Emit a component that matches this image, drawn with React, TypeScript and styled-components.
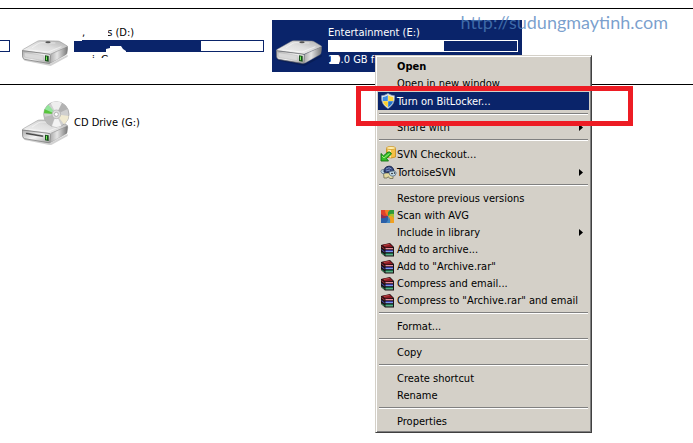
import React from "react";
import styled, { createGlobalStyle, css } from "styled-components";

const NAVY = "#0a246a";
const FACE = "#d4d0c8";

const GlobalStyle = createGlobalStyle`
  * { box-sizing: border-box; }
  body {
    margin: 0;
    background: #fff;
    color: #000;
    font: 11px/14px "DejaVu Sans Condensed", "DejaVu Sans", sans-serif;
    overflow: hidden;
  }
`;

const Page = styled.main`
  position: relative;
  min-height: 100vh;
  padding-top: 8px;
`;

const DriveRow = styled.section<{ $ruled?: boolean }>`
  display: flex;
  gap: 4px;
  padding: 11px 0 12px;
  ${(p) =>
    p.$ruled &&
    css`
      border-top: 1px solid #000;
      border-bottom: 1px solid #000;
    `}
`;

const ClippedTile = styled.div`
  display: flex;
  justify-content: flex-end;
  width: 14px;
  padding: 20px 4px 0 0;
  overflow: hidden;
`;

const Tile = styled.article<{ $selected?: boolean; $center?: boolean }>`
  position: relative;
  display: flex;
  align-items: ${(p) => (p.$center ? "center" : "flex-start")};
  gap: 4px;
  width: 250px;
  height: 52px;
  padding: ${(p) => (p.$center ? "2px 4px 0" : "0 4px")};
  background: ${(p) => (p.$selected ? NAVY : "transparent")};
  color: ${(p) => (p.$selected ? "#fff" : "#000")};
`;

const IconSlot = styled.div<{ $top?: number }>`
  flex: none;
  width: 48px;
  padding-top: ${(p) => p.$top ?? 0}px;
  svg { display: block; }
`;

const Info = styled.div`
  flex: 1;
  min-width: 0;
  padding-top: 6px;
`;

const DriveName = styled.div<{ $indent?: number }>`
  padding-left: ${(p) => p.$indent ?? 0}px;
  display: flex;
  gap: 22px;
  white-space: pre;
`;

const Bar = styled.div<{ $light?: boolean; $used: number }>`
  position: relative;
  width: 190px;
  flex: none;
  height: 12px;
  border: 1px solid ${(p) => (p.$light ? "#fff" : NAVY)};
  &::before {
    content: "";
    display: block;
    height: 100%;
    width: ${(p) => p.$used}%;
    background: ${(p) => (p.$light ? "#fff" : NAVY)};
  }
`;

const Detail = styled.div<{ $indent?: number; $covered?: boolean }>`
  position: relative;
  padding: 1px 0 0 ${(p) => p.$indent ?? 0}px;
  white-space: pre;
  ${(p) =>
    p.$covered &&
    css`
      &::after {
        content: "";
        position: absolute;
        inset: 6px 0 0;
        background: #fff;
      }
    `}
`;

const Smudge = styled.svg<{ $left: number; $top: number }>`
  position: absolute;
  left: ${(p) => p.$left}px;
  top: ${(p) => p.$top}px;
`;

const Menu = styled.div`
  position: absolute;
  z-index: 2;
  left: 103px;
  top: 35px;
  width: 217px;
  padding: 2px;
  color: #000;
  background: ${FACE};
  border: 1px solid;
  border-color: ${FACE} #404040 #404040 ${FACE};
  box-shadow: inset 1px 1px #fff, inset -1px -1px #808080;
  display: flex;
  flex-direction: column;
`;

const Label = styled.span`
  flex: 1;
`;

const MenuItem = styled.button<{ $tall?: boolean; $active?: boolean; $strong?: boolean }>`
  position: relative;
  display: flex;
  align-items: center;
  height: ${(p) => (p.$tall ? 18 : 17)}px;
  padding: 0 6px 0 2px;
  border: 0;
  font: inherit;
  font-weight: ${(p) => (p.$strong ? 700 : 400)};
  text-align: left;
  white-space: nowrap;
  color: ${(p) => (p.$active ? "#fff" : "#000")};
  background: ${(p) => (p.$active ? NAVY : "transparent")};
  ${Label} { padding-top: ${(p) => (p.$tall ? 2 : 0)}px; }
`;

const Glyph = styled.span`
  flex: none;
  width: 17px;
  height: 16px;
  svg { display: block; }
`;

const Separator = styled.hr`
  width: auto;
  height: 2px;
  margin: 3px 1px 4px;
  border: 0;
  border-top: 1px solid #808080;
  border-bottom: 1px solid #fff;
`;

const Highlight = styled.div`
  position: absolute;
  z-index: 3;
  left: 84px;
  right: -111px;
  top: 66px;
  height: 40px;
  border: 5px solid #ed1c24;
  pointer-events: none;
`;

const Watermark = styled.a`
  position: absolute;
  z-index: 1;
  right: 25px;
  top: 10px;
  font: 18px/24px Lato, sans-serif;
  color: rgba(79, 129, 189, 0.75);
  text-decoration: none;
`;

const DriveBody = ({ cd }: { cd?: boolean }) => (
  <g>
    <path d="M3 57 L86 71 L137 44 L137 50 L86 78 L8 62Z" fill="#000" opacity=".18" />
    <path d="M1 32 Q0 30 4 28 L44 5 Q48 2 54 2 L106 3 Q112 3 116 6 L136 18 Q138 20 135 22 L86 42 Q82 43 77 42Z" fill="url(#lid)" stroke="#8b8b8b" strokeWidth="1.5" />
    <path d="M1 32 L78 42 Q86 43 86 46 L85 68 Q84 71 78 70 L8 58 Q3 57 2 51Z" fill="url(#front)" stroke="#6d6d6d" strokeWidth="2" />
    <path d="M86 43 L136 20 Q138 22 137 27 L135 40 Q134 43 130 45 L89 68 L84 70Z" fill="url(#side)" stroke="#777" strokeWidth="1" />
    <path d="M30 23 L50 10 Q54 8 60 8 L100 9 M20 30 L78 36 L118 20" fill="none" stroke="#fff" strokeWidth="2" opacity=".8" />
    {cd ? (
      <path d="M11 39 L64 48 L64 54 L11 45Z" fill="#444" stroke="#fff" strokeWidth="1" />
    ) : (
      <>
        <path d="M7 38 L64 46 L64 62 L12 53 Q8 52 7 47Z" fill="#d9d9d9" stroke="#aaa" />
        <ellipse cx="78" cy="7" rx="8" ry="3" fill="#555" />
      </>
    )}
    <path d="M69 46 L80 48 L80 65 L69 63Z" fill="#174f19" />
    <path d="M72 49 L75 50 L75 61 L72 60Z" fill="#72ee55" />
  </g>
);

const Gradients = () => (
  <defs>
    <linearGradient id="lid" x1="0" y1="1" x2="1" y2="0">
      <stop offset="0" stopColor="#f5f5f5" />
      <stop offset=".55" stopColor="#dedede" />
      <stop offset="1" stopColor="#b0b0b0" />
    </linearGradient>
    <linearGradient id="front" x1="0" y1="0" x2="1" y2="1">
      <stop offset="0" stopColor="#a9a9a9" />
      <stop offset=".5" stopColor="#f4f4f4" />
      <stop offset="1" stopColor="#9b9b9b" />
    </linearGradient>
    <linearGradient id="side" x1="0" y1="0" x2="1" y2="0">
      <stop offset="0" stopColor="#aaa" />
      <stop offset=".4" stopColor="#e5e5e5" />
      <stop offset="1" stopColor="#777" />
    </linearGradient>
  </defs>
);

const HardDriveIcon = () => (
  <svg width="46" height="26" viewBox="0 0 138 78" aria-hidden="true">
    <Gradients />
    <DriveBody />
  </svg>
);

const CdDriveIcon = () => (
  <svg width="48" height="44" viewBox="0 0 144 132" aria-hidden="true">
    <Gradients />
    <g transform="translate(0 55)">
      <DriveBody cd />
    </g>
    <circle cx="103" cy="40" r="38" fill="#cfcfcf" stroke="#999" strokeWidth="2" />
    <path d="M103 40 L86 6 A38 38 0 0 1 120 6Z" fill="#eee" />
    <path d="M103 40 L67 28 A38 38 0 0 1 79 11Z" fill="#92e59a" />
    <path d="M103 40 L66 37 A38 38 0 0 1 68 25Z" fill="#58c43c" />
    <path d="M103 40 L120 6 A38 38 0 0 1 137 24Z" fill="#b2b2b2" />
    <path d="M103 40 L140 45 A38 38 0 0 1 126 70Z" fill="#f0ead0" />
    <path d="M103 40 L66 48 A38 38 0 0 0 88 75Z" fill="#b9b9b9" />
    <path d="M103 40 L90 76 A38 38 0 0 0 118 75Z" fill="#f3f3f3" />
    <circle cx="103" cy="40" r="13" fill="#ddd" stroke="#aaa" strokeWidth="2" />
    <circle cx="103" cy="40" r="6" fill="#fff" stroke="#999" strokeWidth="2" />
  </svg>
);

const ShieldIcon = () => (
  <svg width="16" height="16" viewBox="0 0 16 16" aria-hidden="true">
    <path d="M8 .5 Q11 2.6 14.5 2.8 Q15.2 11.5 8 15.6 Q.8 11.5 1.5 2.8 Q5 2.6 8 .5Z" fill="#e8eef5" stroke="#8196ad" strokeWidth=".8" />
    <path d="M7.8 2.2 V8 H2.8 Q2.4 6 2.8 4Q5.5 3.8 7.8 2.2Z" fill="#3c8be0" />
    <path d="M8.2 2.2 V8 H13.2 Q13.6 6 13.2 4Q10.5 3.8 8.2 2.2Z" fill="#ffd93b" />
    <path d="M7.8 8.3 H2.9 Q3.8 12 7.8 14.3Z" fill="#fbd02c" />
    <path d="M8.2 8.3 H13.1 Q12.2 12 8.2 14.3Z" fill="#2273cc" />
  </svg>
);

const CheckoutIcon = () => (
  <svg width="16" height="16" viewBox="0 0 16 16" aria-hidden="true">
    <path d="M6.5 2 V11 Q11 13 15.5 11 V2Z" fill="#f5c044" stroke="#c08a20" strokeWidth=".8" />
    <path d="M8 3 V11 L11 11.7 V3.5Z" fill="#ffe9a6" />
    <ellipse cx="11" cy="2" rx="4.5" ry="1.6" fill="#ffedab" stroke="#cf9a30" strokeWidth=".8" />
    <path d="M10 6 L11.5 8 L6.5 12.5 L8.5 15 H1 V7.5 L3.5 9.8 L8 6Z" fill="#35bd2a" stroke="#127310" strokeWidth=".9" />
    <path d="M2 10 L4 12 L9.5 7.5" fill="none" stroke="#9cec78" strokeWidth="1" />
  </svg>
);

const TortoiseIcon = () => (
  <svg width="17" height="16" viewBox="0 0 17 16" aria-hidden="true">
    <path d="M3.5 9 L4 14 H7 L8 12.7 L10 14.5 H13 L13 9Z" fill="#e3d9a0" stroke="#6c6952" strokeWidth=".8" />
    <path d="M.8 7.5 Q1 5 4 5.5 L5 9.5 Q1.5 10.5 .8 7.5Z" fill="#b8cfdf" stroke="#5e7284" strokeWidth=".7" />
    <path d="M4 8 Q4 2.5 9 2.2 Q13 2 14 7 Q10 9.5 4 8Z" fill="#34477d" stroke="#1c2750" />
    <path d="M6 5 L9 3.7 L11.5 5 M6 7 L10 6" fill="none" stroke="#7f92c4" />
    <path d="M9 8 Q15.5 5.5 16.2 9 Q16 12.4 12 12.2 Q8.8 11.5 9 8Z" fill="#c4dce8" stroke="#566a7d" strokeWidth=".8" />
    <circle cx="12" cy="9.5" r=".8" fill="#111" />
    <circle cx="14.5" cy="9" r=".7" fill="#111" />
  </svg>
);

const AvgIcon = () => (
  <svg width="16" height="16" viewBox="0 0 16 16" aria-hidden="true">
    <path d="M1 2 H8 V8 H1Z" fill="#e0412a" />
    <path d="M8 2 H14 V8 H8Z" fill="#2f9a3a" />
    <path d="M1 8 H8 V15 H1Z" fill="#2a5fa8" />
    <path d="M8 8 H14 V15 H8Z" fill="#f0a122" />
    <path d="M5 2 H10 Q7 4 8 8 Q5 6 5 2Z" fill="#f37d24" />
    <path d="M14 6 V10 Q11 7 8 8 Q10 5 14 6Z" fill="#a7c22e" />
    <path d="M10 15 H6 Q9 12 8 8 Q11 11 10 15Z" fill="#4087c2" />
    <path d="M1 10 V6 Q4 9 8 8 Q5 11 1 10Z" fill="#8b2f55" />
  </svg>
);

const ArchiveIcon = () => (
  <svg width="16" height="16" viewBox="0 0 16 16" aria-hidden="true">
    <path d="M1 3 L10 1 L14 5 V14.5 H5 L1 11Z" fill="#1b1214" />
    <path d="M2 3 L9.5 1.5 L13 5 L5.5 5.5Z" fill="#8c1822" />
    <path d="M4 3.5 L9.5 2.4" stroke="#c4554f" strokeWidth=".8" />
    <path d="M5.5 6 H13 V7.3 H5.5Z" fill="#e58f9f" />
    <path d="M5.5 8 H13 V9 H5.5Z" fill="#36329c" />
    <path d="M5.5 9 H13 V10.2 H5.5Z" fill="#7b9bea" />
    <path d="M5.5 11.2 H13 V12.2 H5.5Z" fill="#127a4c" />
    <path d="M5.5 12.2 H13 V13.4 H5.5Z" fill="#6bd3a0" />
    <path d="M1.5 4 L4.5 6.5 V7.5 L1.5 5Z" fill="#b52a3a" />
    <path d="M1.5 7 L4.5 9.5 V10.5 L1.5 8Z" fill="#4a50bd" />
    <path d="M1.5 10 L4.5 12.5 V13.5 L1.5 11Z" fill="#2c9a62" />
  </svg>
);

const Arrow = () => (
  <svg width="4" height="7" viewBox="0 0 4 7" aria-hidden="true">
    <path d="M0 0 L4 3.5 L0 7Z" fill="#000" />
  </svg>
);

type Entry = {
  label: string;
  icon?: React.ReactNode;
  strong?: boolean;
  active?: boolean;
  tall?: boolean;
  sub?: boolean;
};

const groups: Entry[][] = [
  [
    { label: "Open", strong: true },
    { label: "Open in new window" },
    { label: "Turn on BitLocker...", icon: <ShieldIcon />, active: true, tall: true },
  ],
  [{ label: "Share with", sub: true }],
  [
    { label: "SVN Checkout...", icon: <CheckoutIcon />, tall: true },
    { label: "TortoiseSVN", icon: <TortoiseIcon />, tall: true, sub: true },
  ],
  [
    { label: "Restore previous versions" },
    { label: "Scan with AVG", icon: <AvgIcon /> },
    { label: "Include in library", sub: true },
    { label: "Add to archive...", icon: <ArchiveIcon /> },
    { label: 'Add to "Archive.rar"', icon: <ArchiveIcon /> },
    { label: "Compress and email...", icon: <ArchiveIcon /> },
    { label: 'Compress to "Archive.rar" and email', icon: <ArchiveIcon /> },
  ],
  [{ label: "Format..." }],
  [{ label: "Copy" }],
  [{ label: "Create shortcut" }, { label: "Rename" }],
  [{ label: "Properties" }],
];

const ContextMenu = () => (
  <Menu role="menu">
    {groups.map((group, i) => (
      <React.Fragment key={i}>
        {i > 0 && <Separator />}
        {group.map((e) => (
          <MenuItem key={e.label} type="button" role="menuitem" $tall={e.tall} $active={e.active} $strong={e.strong}>
            <Glyph>{e.icon}</Glyph>
            <Label>{e.label}</Label>
            {e.sub && <Arrow />}
          </MenuItem>
        ))}
      </React.Fragment>
    ))}
  </Menu>
);

export default function App() {
  return (
    <Page>
      <GlobalStyle />
      <DriveRow $ruled>
        <ClippedTile>
          <Bar $used={0} />
        </ClippedTile>
        <Tile>
          <IconSlot $top={20}>
            <HardDriveIcon />
          </IconSlot>
          <Info>
            <DriveName $indent={8}>
              <span>,</span>
              <span>s (D:)</span>
            </DriveName>
            <Bar $used={67}>
              <Smudge $left={-1} $top={-1} width="53" height="12" aria-hidden="true">
                <path d="M0 0 H8 V1 H0Z M32 12 V9 L36 8 V6 H47 L49 9 L52 11 V12Z" fill="#fff" />
              </Smudge>
            </Bar>
            <Detail $indent={18} $covered>
              {"i  G"}
            </Detail>
          </Info>
          <Smudge $left={86} $top={8} width="6" height="12" aria-hidden="true">
            <path d="M0 0 H4 V12 H0Z" fill="#fff" />
          </Smudge>
        </Tile>
        <Tile $selected>
          <IconSlot $top={20}>
            <HardDriveIcon />
          </IconSlot>
          <Info>
            <DriveName>Entertainment (E:)</DriveName>
            <Bar $light $used={61} />
            <Detail>
              10.0 GB free of
              <Smudge $left={1} $top={3} width="11" height="10" aria-hidden="true">
                <path d="M2 0 H9 L11 3 L10 9 H0 L2 6Z" fill="#fff" />
              </Smudge>
            </Detail>
          </Info>
          <ContextMenu />
          <Highlight />
        </Tile>
      </DriveRow>
      <DriveRow>
        <ClippedTile />
        <Tile $center>
          <IconSlot>
            <CdDriveIcon />
          </IconSlot>
          <DriveName>CD Drive (G:)</DriveName>
        </Tile>
      </DriveRow>
      <Watermark href="http://sudungmaytinh.com">http://sudungmaytinh.com</Watermark>
    </Page>
  );
}
